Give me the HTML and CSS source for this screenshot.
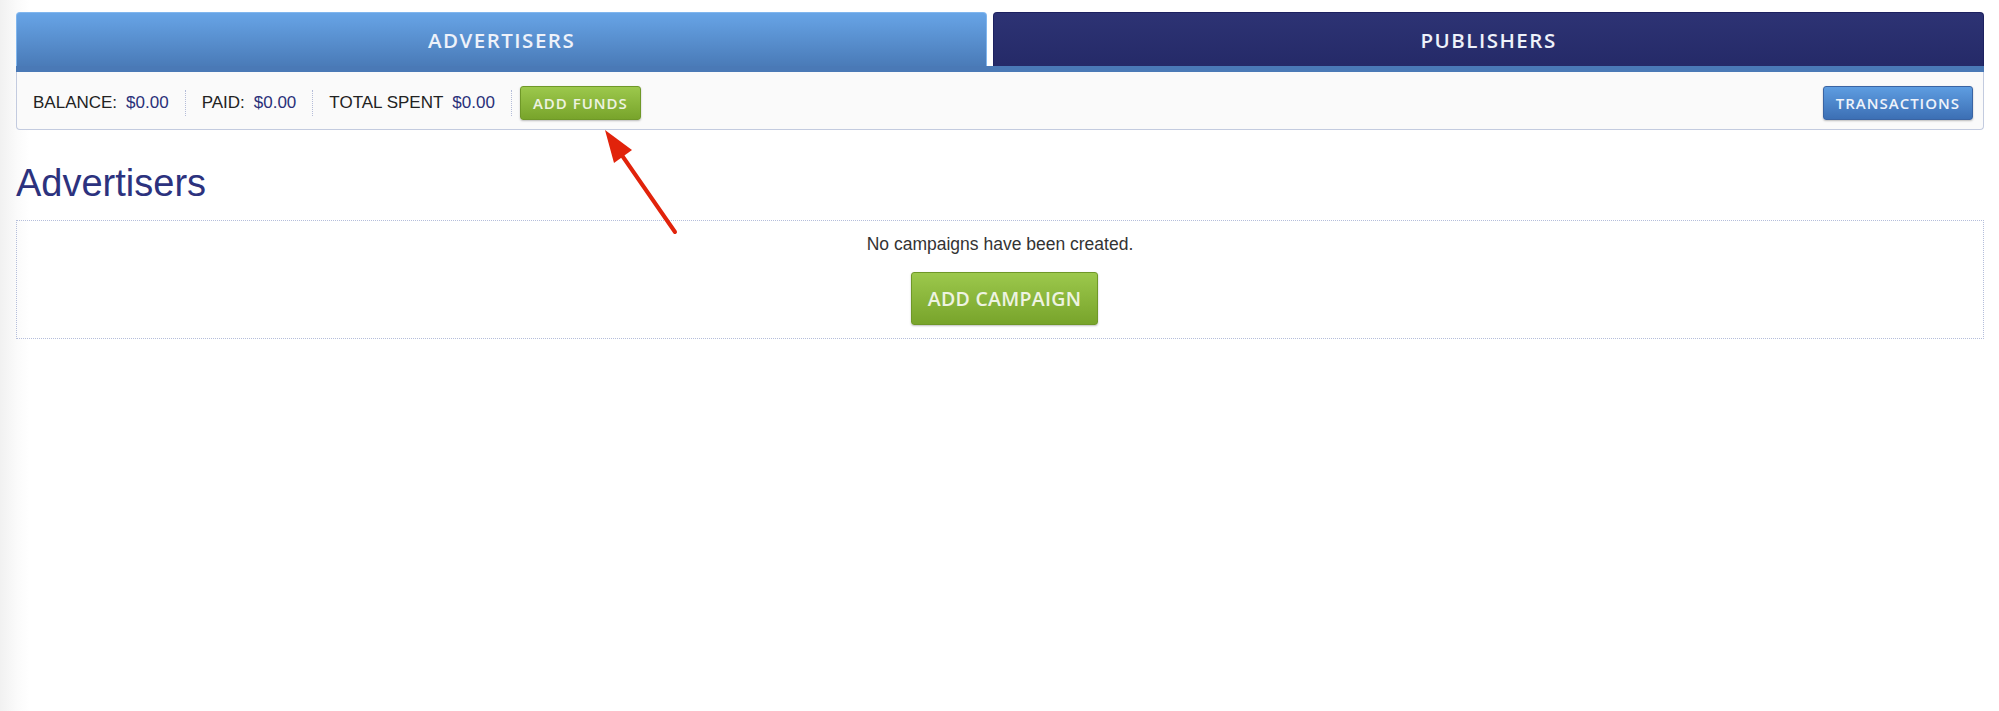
FILE: index.html
```html
<!DOCTYPE html>
<html lang="en">
<head>
  <meta charset="UTF-8">
  <title>Advertisers</title>
  <link rel="stylesheet" href="styles.css">
</head>
<body>
  <div class="page">
    <!-- Section tabs -->
    <div class="tabs">
      <a class="tab active" href="#">ADVERTISERS</a>
      <a class="tab" href="#">PUBLISHERS</a>
    </div>

    <!-- Account summary -->
    <div class="summary">
      <div class="stat">BALANCE: <span class="value">$0.00</span></div>
      <div class="stat">PAID: <span class="value">$0.00</span></div>
      <div class="stat">TOTAL SPENT <span class="value">$0.00</span></div>
      <button class="btn btn-green btn-small">ADD FUNDS</button>
      <button class="btn btn-blue btn-small push-right">TRANSACTIONS</button>
    </div>

    <h1 class="title">Advertisers</h1>

    <div class="campaigns">
      <p class="empty">No campaigns have been created.</p>
      <button class="btn btn-green btn-large">ADD CAMPAIGN</button>
    </div>
  </div>

  <!-- annotation arrow -->
  <svg class="arrow" width="1999" height="711" viewBox="0 0 1999 711">
    <line x1="675" y1="232" x2="621" y2="154" stroke="#e1230b" stroke-width="4" stroke-linecap="round"/>
    <polygon points="605,130 632,150 614,163" fill="#e1230b"/>
  </svg>
</body>
</html>
```

FILE: styles.css
```css
/* Reset */
* {
  margin: 0;
  padding: 0;
  box-sizing: border-box;
}

body {
  position: relative;
  min-height: 711px;
  font-family: 'Liberation Sans', Arial, sans-serif;
  color: #222;
  background: linear-gradient(to right, #f1f1f1 0, #fbfbfb 18px, #fff 30px);
}

.page {
  padding: 12px 15px 0 16px;
}

/* Tabs */
.tabs {
  display: flex;
  gap: 6px;
  border-bottom: 6px solid #4a79b6;
}

.tab {
  flex: 1;
  height: 54px;
  display: flex;
  align-items: center;
  justify-content: center;
  border-radius: 4px 4px 0 0;
  font-family: 'Open Sans', sans-serif;
  font-weight: 600;
  font-size: 20.5px;
  letter-spacing: 1.5px;
  color: #eef2fa;
  text-decoration: none;
  background: linear-gradient(#2d3374, #252a68);
  border: 1px solid #1d2160;
  border-bottom: none;
}

.tab.active {
  flex: 0.98;
  background: linear-gradient(#67a4e6, #4a7bb8);
  border-color: #80b6ee;
}

/* Summary bar */
.summary {
  display: flex;
  align-items: center;
  height: 58px;
  padding: 5px 10px 0 0;
  background: #fafafa;
  border: 1px solid #c3cbdf;
  border-top: none;
  border-radius: 0 0 4px 4px;
}

.stat {
  display: flex;
  align-items: center;
  height: 26px;
  padding: 0 16px;
  border-right: 1px dotted #b4bcd8;
  font-size: 17px;
  color: #222;
}

.stat .value {
  margin-left: 9px;
  color: #2a3079;
}

.summary .btn-small {
  margin-left: 8px;
}

.summary .push-right {
  margin-left: auto;
}

/* Buttons */
.btn {
  font-family: 'Open Sans', sans-serif;
  font-weight: 600;
  border-radius: 3px;
  cursor: pointer;
  box-shadow: 0 1px 2px rgba(0, 0, 0, 0.25);
}

.btn-small {
  height: 34px;
  padding: 0 12px;
  font-size: 15px;
  letter-spacing: 1px;
}

.btn-large {
  height: 53px;
  margin-left: 9px;
  padding: 0 16px;
  font-size: 19.5px;
  letter-spacing: 0.3px;
}

.btn-green {
  color: #eef3e2;
  background: linear-gradient(#9cc84c, #78a42b);
  border: 1px solid #6f9828;
}

.btn-blue {
  color: #eef3fb;
  background: linear-gradient(#5e9de1, #3c6fb4);
  border: 1px solid #3a64a3;
}

/* Heading */
.title {
  margin: 32px 0 15px;
  font-weight: normal;
  font-size: 38px;
  color: #2c327e;
}

/* Campaign list */
.campaigns {
  display: flex;
  flex-direction: column;
  align-items: center;
  height: 119px;
  padding-top: 13px;
  border: 1px dotted #b5bedb;
}

.empty {
  font-size: 17.5px;
  line-height: 20px;
  color: #333;
  margin-bottom: 18px;
}

.arrow {
  position: absolute;
  left: 0;
  top: 0;
  pointer-events: none;
}
```
